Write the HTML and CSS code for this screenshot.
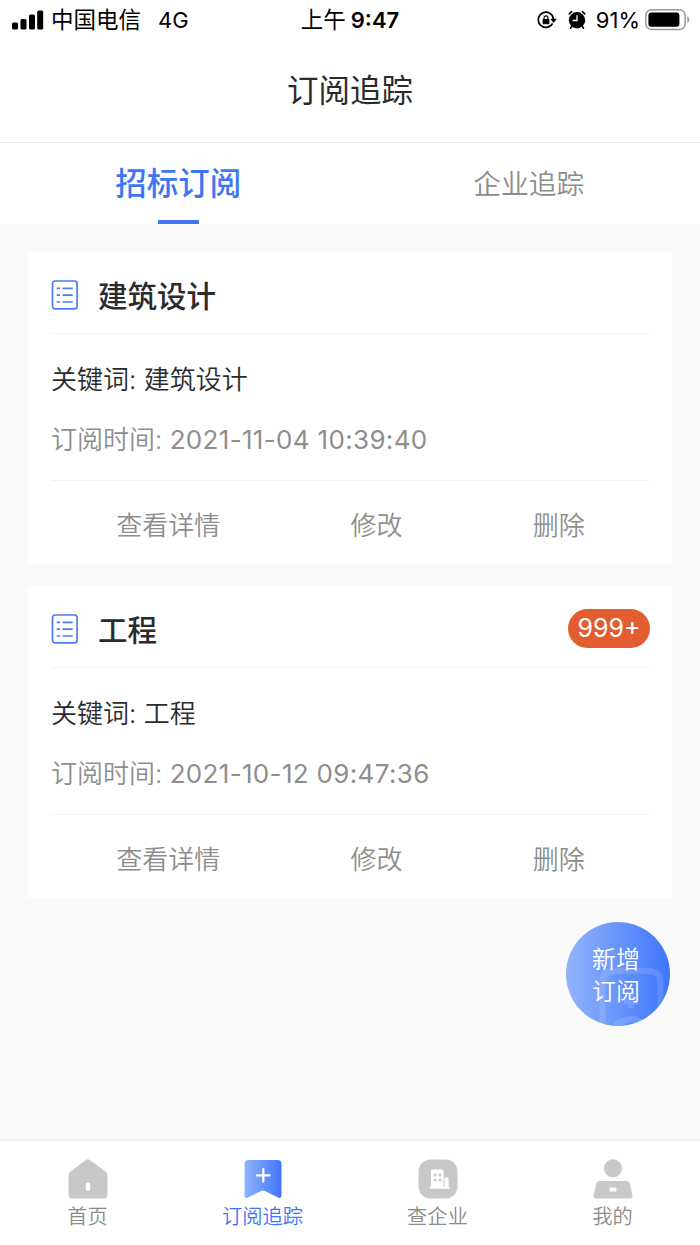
FILE: index.html
```html
<!DOCTYPE html>
<html lang="zh-CN">

<head>
    <meta charset="UTF-8">
    <meta name="viewport" content="width=device-width, initial-scale=1.0">
    <title>订阅追踪</title>
    <link rel="stylesheet" href="styles.css">
</head>

<body>
    <!-- 状态栏 -->
    <section class="status-bar">
        <div class="status-left">
            <svg class="signal" width="32" height="20" viewBox="0 0 32 20">
                <rect x="0" y="12.5" width="6" height="7" rx="1.6" />
                <rect x="8.5" y="9" width="6" height="10.5" rx="1.6" />
                <rect x="17" y="4.5" width="6" height="15" rx="1.6" />
                <rect x="25.2" y="0.5" width="6" height="19" rx="1.6" />
            </svg>
            <span class="carrier">中国电信</span>
            <span class="network">4G</span>
        </div>
        <div class="status-time"><span>上午</span><b>9:47</b></div>
        <div class="status-right">
            <svg class="lock" width="20" height="18" viewBox="0 0 20 18">
                <path d="M15.600 12.400A7.600 7.600 0 1 1 16.500 8.500" fill="none" stroke="#000" stroke-width="1.6" />
                <path d="M13.400 7.800h6.400l-3.200 4.200z" />
                <rect x="5.6" y="8" width="6.8" height="5.2" rx="0.7" />
                <path d="M7.100 8.300V6.700a1.900 1.900 0 0 1 3.800 0v1.600" fill="none" stroke="#000" stroke-width="1.2" />
            </svg>
            <svg class="alarm" width="18" height="20" viewBox="0 0 18 20">
                <circle cx="9" cy="10.2" r="8.2" />
                <path d="M1.200 3.900L3.600 1.700M16.800 3.900L14.400 1.700M3.500 16.800L2.500 18.200M14.500 16.800L15.500 18.200" stroke="#000" stroke-width="1.6" stroke-linecap="round" />
                <path d="M9 5.200v5.300H4.600" fill="none" stroke="#fff" stroke-width="1.3" />
            </svg>
            <span class="percent">91%</span>
            <svg class="battery" width="45" height="22" viewBox="0 0 45 22">
                <rect x="0.8" y="0.8" width="39.4" height="19.6" rx="5.5" fill="#fff" stroke="#999" stroke-width="1.5" />
                <rect x="3.4" y="3.4" width="31" height="14.4" rx="3" />
                <path d="M42.300 7.300c2.600 1.200 2.600 5.600 0 6.800z" fill="#999" />
            </svg>
        </div>
    </section>

    <header class="nav-title">订阅追踪</header>

    <!-- 顶部切换 -->
    <nav class="tabs">
        <div class="tab active">招标订阅</div>
        <div class="tab">企业追踪</div>
    </nav>

    <!-- 订阅列表 -->
    <main class="list">
        <section class="card">
            <div class="card-head">
                <svg class="list-icon" width="28" height="30" viewBox="0 0 28 30">
                    <rect x="1.5" y="1" width="24.6" height="27.8" rx="2.5" />
                    <path d="M5.700 8.300h3.400M11.500 8.300h10.200M5.700 15.200h3.400M11.500 15.200h10.200M5.700 22h3.400M11.500 22h10.200" />
                </svg>
                <h3>建筑设计</h3>
            </div>
            <div class="card-body">
                <p class="keyword">关键词: 建筑设计</p>
                <p class="time">订阅时间: <span>2021-11-04 10:39:40</span></p>
            </div>
            <div class="card-foot">
                <span>查看详情</span>
                <span>修改</span>
                <span>删除</span>
            </div>
        </section>
        <section class="card">
            <div class="card-head">
                <svg class="list-icon" width="28" height="30" viewBox="0 0 28 30">
                    <rect x="1.5" y="1" width="24.6" height="27.8" rx="2.5" />
                    <path d="M5.700 8.300h3.400M11.500 8.300h10.200M5.700 15.200h3.400M11.500 15.200h10.200M5.700 22h3.400M11.500 22h10.200" />
                </svg>
                <h3>工程</h3>
                <span class="badge">999+</span>
            </div>
            <div class="card-body">
                <p class="keyword">关键词: 工程</p>
                <p class="time">订阅时间: <span>2021-10-12 09:47:36</span></p>
            </div>
            <div class="card-foot">
                <span>查看详情</span>
                <span>修改</span>
                <span>删除</span>
            </div>
        </section>
    </main>

    <!-- 悬浮按钮 -->
    <div class="add-button">
        <svg class="add-mark" width="104" height="104" viewBox="0 0 104 104">
            <path d="M36.500 110V61q0-12 12-12h34q12 0 12 12v42" />
            <path d="M48 103l12-5q5-2 10 0l12 5" />
            <path d="M65 72v14M58 79h14" />
        </svg>
        <span>新增</span>
        <span>订阅</span>
    </div>

    <!-- 底部导航 -->
    <footer class="tabbar">
        <div class="tabbar-item">
            <svg width="40" height="40" viewBox="0 0 40 40">
                <path d="M17.500 1.200q2.300-1.700 4.600 0L37.500 12.500q2 1.500 2 4V35.500q0 4-4 4h-31q-4 0-4-4V16.500q0-2.500 2-4z" fill="#c8c8c8" />
                <rect x="17.8" y="23.5" width="4.4" height="8.5" rx="2" fill="#fff" />
            </svg>
            <span>首页</span>
        </div>
        <div class="tabbar-item active">
            <svg width="40" height="40" viewBox="0 0 40 40">
                <defs>
                    <linearGradient id="mark" x1="0" y1="0" x2="1" y2="0">
                        <stop offset="0" stop-color="#8fb3fb" />
                        <stop offset="1" stop-color="#4276fb" />
                    </linearGradient>
                </defs>
                <path d="M5.500 1h29q4 0 4 4v31q0 4-3.500 2.500L22 32q-2-1-4 0L5 38.500Q1.500 40 1.500 36V5q0-4 4-4z" fill="url(#mark)" />
                <path d="M20.300 10.200v12.400M14.100 16.400h12.400" stroke="#fff" stroke-width="2.3" stroke-linecap="round" />
            </svg>
            <span>订阅追踪</span>
        </div>
        <div class="tabbar-item">
            <svg width="40" height="40" viewBox="0 0 40 40">
                <rect x="0.5" y="0.5" width="39" height="39" rx="12" fill="#c8c8c8" />
                <path d="M13 11.500q0-1 1-1h10.500q1 0 1 1V27.500h1V18.500h3q1 0 1 1v8.200h1v2H11.500v-2H13z" fill="#fff" />
                <g fill="#c8c8c8">
                    <circle cx="17" cy="16" r="1.5" />
                    <circle cx="22" cy="16" r="1.5" />
                    <circle cx="17" cy="21" r="1.5" />
                    <circle cx="22" cy="21" r="1.5" />
                </g>
            </svg>
            <span>查企业</span>
        </div>
        <div class="tabbar-item">
            <svg width="40" height="40" viewBox="0 0 40 40">
                <circle cx="20" cy="9.3" r="9" fill="#c8c8c8" />
                <path d="M7 22h26q3 0 3.800 3l2.600 11q.6 3.500-3 3.500H3.600q-3.600 0-3-3.500l2.600-11Q4 22 7 22z" fill="#c8c8c8" />
                <rect x="16.5" y="28.5" width="7" height="4" rx="1" fill="#fff" />
            </svg>
            <span>我的</span>
        </div>
    </footer>
</body>

</html>
```

FILE: styles.css
```css
* {
    box-sizing: border-box;
}

body {
    position: relative;
    display: flex;
    flex-direction: column;
    height: 1245px;
    margin: 0;
    background: #fafafa;
    color: #2b2b2b;
    font-family: Inter, "Noto Sans CJK SC", sans-serif;
    overflow: hidden;
}

h3,
p {
    margin: 0;
}

svg {
    flex: none;
}

/* 状态栏 */
.status-bar {
    display: grid;
    grid-template-columns: 1fr auto 1fr;
    align-items: center;
    height: 38px;
    padding: 0 10px 2px 12px;
    background: #fff;
    color: #000;
    font-size: 22.5px;
    line-height: 40px;
}

.status-left,
.status-right,
.status-time {
    display: flex;
    align-items: center;
}

.signal {
    margin-right: 7px;
}

.network {
    margin-left: 17px;
    font-size: 22px;
}

.status-time b {
    margin-left: 5px;
    font-size: 22px;
    font-weight: 600;
}

.status-time {
    margin-left: -2px;
}

.status-right {
    justify-content: flex-end;
}

.alarm {
    margin: 0 10px 1px 11px;
}

.percent {
    font-size: 22px;
}

.battery {
    margin-left: 5px;
}

.nav-title {
    height: 105px;
    border-bottom: 1px solid #e6e6e6;
    background: #fff;
    font-size: 31.5px;
    line-height: 106px;
    text-align: center;
}

/* 顶部切换 */
.tabs {
    display: flex;
    height: 81px;
    padding-left: 3px;
    margin-right: -4px;
    background: #fff;
}

.tab {
    flex: 1;
    color: #8c8c8c;
    font-size: 27.8px;
    font-weight: 350;
    line-height: 83px;
    text-align: center;
}

.tab.active {
    display: flex;
    flex-direction: column;
    align-items: center;
    color: #3f76f5;
    font-size: 31.5px;
    font-weight: 500;
    line-height: 81px;
}

.tab.active::after {
    content: "";
    width: 41px;
    height: 4px;
    margin-top: -4px;
    background: #3f76f5;
}

/* 订阅列表 */
.list {
    flex: 1;
    display: flex;
    flex-direction: column;
    gap: 22px;
    padding: 28px;
}

.card {
    padding: 0 22px 0 23px;
    background: #fff;
}

.card-head {
    display: flex;
    align-items: center;
    height: 82px;
    padding-top: 4px;
    border-bottom: 1px solid #f3f3f3;
}

.list-icon {
    margin-right: 19px;
    fill: none;
    stroke: #4a7cf5;
    stroke-width: 1.7;
}

.card-head h3 {
    margin-bottom: 1px;
    font-size: 29.5px;
    font-weight: 500;
}

.badge {
    width: 82px;
    height: 39px;
    margin-left: auto;
    border-radius: 20px;
    background: #e35d31;
    color: #fff;
    font-size: 25px;
    line-height: 39px;
    text-align: center;
}

.card-body {
    height: 147px;
    padding-top: 16px;
    border-bottom: 1px solid #f3f3f3;
    font-size: 26px;
    font-weight: 350;
    line-height: 60px;
}

.time {
    color: #8e8e8e;
}

.time span {
    font-weight: 400;
    letter-spacing: 0.33px;
}

.card-foot {
    display: flex;
    justify-content: space-around;
    height: 83px;
    color: #8e8e8e;
    font-size: 26px;
    font-weight: 350;
    line-height: 89px;
}

/* 悬浮按钮 */
.add-button {
    position: absolute;
    top: 922px;
    right: 30px;
    display: flex;
    flex-direction: column;
    align-items: center;
    width: 104px;
    height: 104px;
    padding: 22px 4px 0 0;
    border-radius: 50%;
    background: linear-gradient(90deg, #92b4fb, #3f76fb);
    color: #fff;
    font-size: 24px;
    font-weight: 350;
    line-height: 32px;
    overflow: hidden;
}

.add-button span {
    position: relative;
}

.add-mark {
    position: absolute;
    top: 0;
    left: 0;
    fill: none;
    stroke: #fff;
    stroke-width: 6;
    opacity: 0.12;
}

/* 底部导航 */
.tabbar {
    display: flex;
    height: 106px;
    border-top: 2px solid #f2f2f2;
    background: #fff;
}

.tabbar-item {
    flex: 1;
    display: flex;
    flex-direction: column;
    align-items: center;
    padding-top: 18px;
    color: #8c8c8c;
    font-size: 20.3px;
    font-weight: 350;
    line-height: 35px;
}

.tabbar-item.active {
    color: #3f76f5;
}
```
